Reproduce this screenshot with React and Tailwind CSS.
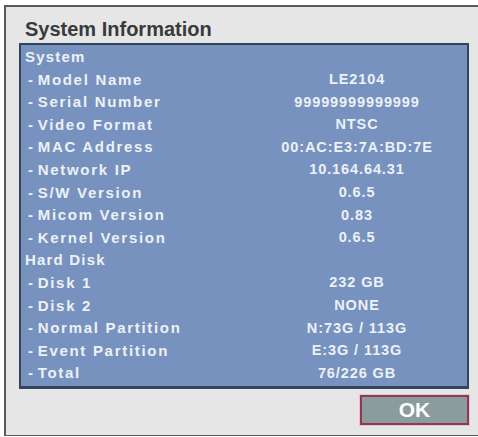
import React from 'react';

const rows = [
  { label: 'System', header: true },
  { label: 'Model Name', value: 'LE2104' },
  { label: 'Serial Number', value: '99999999999999' },
  { label: 'Video Format', value: 'NTSC' },
  { label: 'MAC Address', value: '00:AC:E3:7A:BD:7E' },
  { label: 'Network IP', value: '10.164.64.31' },
  { label: 'S/W Version', value: '0.6.5' },
  { label: 'Micom Version', value: '0.83' },
  { label: 'Kernel Version', value: '0.6.5' },
  { label: 'Hard Disk', header: true },
  { label: 'Disk 1', value: '232 GB' },
  { label: 'Disk 2', value: 'NONE' },
  { label: 'Normal Partition', value: 'N:73G / 113G' },
  { label: 'Event Partition', value: 'E:3G / 113G' },
  { label: 'Total', value: '76/226 GB' },
];

function InfoRow({ label, value, header }) {
  if (header) {
    return (
      <div className="col-span-2 h-[22.6px] flex items-center pl-[4px] tracking-[1.2px]">
        {label}
      </div>
    );
  }
  return (
    <>
      <div className="h-[22.6px] flex items-center pl-[7px] tracking-[1.7px] whitespace-nowrap">
        <span className="mr-[3px]">-</span>
        {label}
      </div>
      <div className="h-[22.6px] flex items-center justify-center pl-[6px] tracking-[0.9px] text-[14.5px] whitespace-nowrap">
        {value}
      </div>
    </>
  );
}

export default function App() {
  return (
    <div
      className="w-[478px] h-[437px] bg-white pt-[5px] pl-[4px] overflow-hidden"
      style={{ fontFamily: '"Liberation Sans", Arial, sans-serif' }}
    >
      <div className="h-[431px] bg-[#e6e6e6] border-t-2 border-l-2 border-b border-[#5a5a5a] flex flex-col">
        <div className="pl-[19px] pt-[10px] h-[36px] text-[20px] leading-[25px] font-bold text-[#3a3a3a]">
          System Information
        </div>
        <div className="ml-[13px] mr-[9px] border-2 border-b-[3px] border-[#33445c] bg-[#7792be] py-[1px] grid grid-cols-[220px_1fr] text-[15px] font-bold text-[#edf1f8]">
          {rows.map(row => (
            <InfoRow key={row.label} {...row} />
          ))}
        </div>
        <div className="flex justify-end mr-[9px] mt-[6px]">
          <button
            type="button"
            className="w-[109px] h-[30px] border-2 border-[#8c3a5a] ring-1 ring-[#f2bfd0] bg-[#8b9c9d] text-white text-[21px] font-bold leading-none flex items-center justify-center"
          >
            OK
          </button>
        </div>
      </div>
    </div>
  );
}
